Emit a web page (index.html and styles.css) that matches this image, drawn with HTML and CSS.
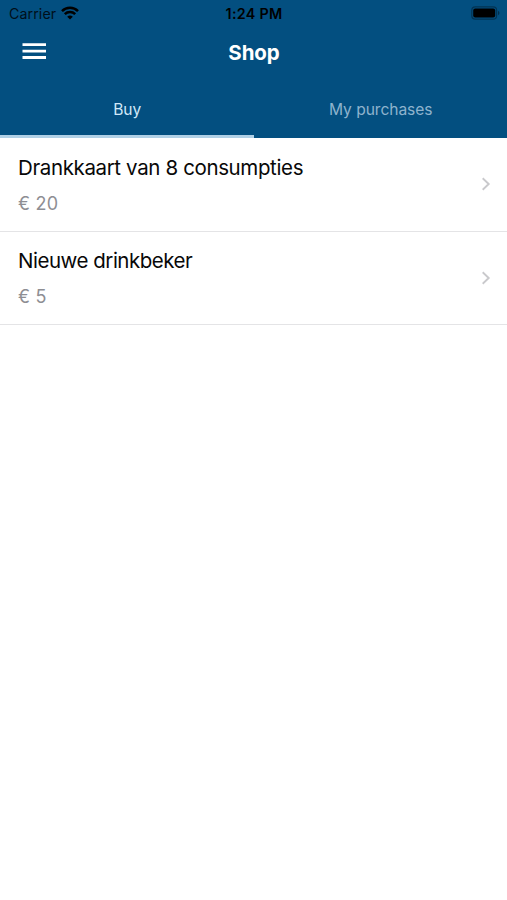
FILE: index.html
```html
<!DOCTYPE html>
<html lang="en">
<head>
<meta charset="utf-8">
<title>Shop</title>
<link rel="stylesheet" href="styles.css">
</head>
<body>
<header class="header">
  <div class="status">
    <div class="carrier"><span class="carrier-name">Carrier</span>
      <svg class="wifi" width="18" height="14" viewBox="0 0 18 14" fill="none" stroke="#000" stroke-width="2.5"><path d="M1 5.1a11.4 11.4 0 0 1 16 0M3.8 8.2a7.4 7.4 0 0 1 10.4 0"/><path d="M9 13.6 6.2 10.8a4 4 0 0 1 5.6 0z" fill="#000" stroke="none"/></svg>
    </div>
    <div class="time">1:24 PM</div>
    <div class="power">
      <svg width="29" height="14" viewBox="0 0 29 14"><rect x=".8" y=".9" width="24.8" height="12.2" rx="3.4" fill="none" stroke="#000" stroke-opacity=".35" stroke-width="1.2"/><rect x="2.2" y="2.4" width="22" height="9.2" rx="2" fill="#000"/><path d="M27 4.8c2 .8 2 3.6 0 4.4z" fill="#000" fill-opacity=".4"/></svg>
    </div>
  </div>
  <div class="bar">
    <svg class="menu" width="24" height="17" viewBox="0 0 24 17" fill="#fff"><path d="M.5 .3h23.5v2.8H.5zM.5 6.7h23.5v2.8H.5zM.5 13.1h23.5v2.8H.5z"/></svg>
    <h1 class="heading">Shop</h1>
  </div>
  <nav class="tabs">
    <div class="tab active">Buy</div>
    <div class="tab">My purchases</div>
  </nav>
</header>
<main>
  <div class="row">
    <div class="info"><div class="title">Drankkaart van 8 consumpties</div><div class="price">€ 20</div></div>
    <svg class="chevron" width="10" height="14" viewBox="0 0 10 14"><path d="M1.7 1.3 7.7 7l-6 5.7"/></svg>
  </div>
  <div class="row">
    <div class="info"><div class="title short">Nieuwe drinkbeker</div><div class="price">€ 5</div></div>
    <svg class="chevron" width="10" height="14" viewBox="0 0 10 14"><path d="M1.7 1.3 7.7 7l-6 5.7"/></svg>
  </div>
</main>
</body>
</html>
```

FILE: styles.css
```css
* { box-sizing: border-box; }
body { margin: 0; min-height: 900px; background: #fff; color: #111; font-family: Inter, "Liberation Sans", sans-serif; }
.header { height: 138px; background: #034f80; display: flex; flex-direction: column; }
.status { height: 27px; display: grid; grid-template-columns: 1fr auto 1fr; align-items: center; padding: 0 7px 0 9px; color: #000; }
.carrier { display: flex; align-items: center; gap: 5px; margin-top: -1px; }
.carrier-name { font-size: 14.2px; line-height: 18px; letter-spacing: .1px; opacity: .8; padding-top: 1px; }
.wifi { display: block; }
.time { font-size: 14.3px; font-weight: 600; line-height: 18px; letter-spacing: .3px; margin-left: -1px; }
.power { display: flex; justify-content: flex-end; margin-top: -1px; }
.power svg { display: block; }
.bar { height: 50px; display: grid; grid-template-columns: 24px 1fr 24px; align-items: center; padding: 0 22px; }
.menu { display: block; margin-top: -2px; }
.heading { margin: 1px 0 0 1px; text-align: center; color: #fff; font-size: 20.5px; line-height: 26px; font-weight: 700; letter-spacing: -.1px; }
.tabs { flex: 1; display: grid; grid-template-columns: 1fr 1fr; }
.tab { display: flex; justify-content: center; padding: 22px 0 0 1px; font-size: 15.6px; line-height: 22px; letter-spacing: -.05px; color: #8eb3cd; border-bottom: 3px solid transparent; }
.active { color: #d0e8f8; border-bottom-color: #b0d0e6; }
.row { height: 93.5px; display: flex; align-items: center; justify-content: space-between; padding: 0 16px 0 18px; border-bottom: 1px solid #e4e4e6; }
.title { font-size: 20.5px; line-height: 28px; letter-spacing: -.37px; color: #080808; }
.short { letter-spacing: -.48px; }
.price { margin-top: 9px; font-size: 18px; line-height: 25px; letter-spacing: .2px; color: #8e8e93; }
.info { padding-top: 1px; }
.chevron { fill: none; stroke: #c9c9cc; stroke-width: 1.9; }
```
